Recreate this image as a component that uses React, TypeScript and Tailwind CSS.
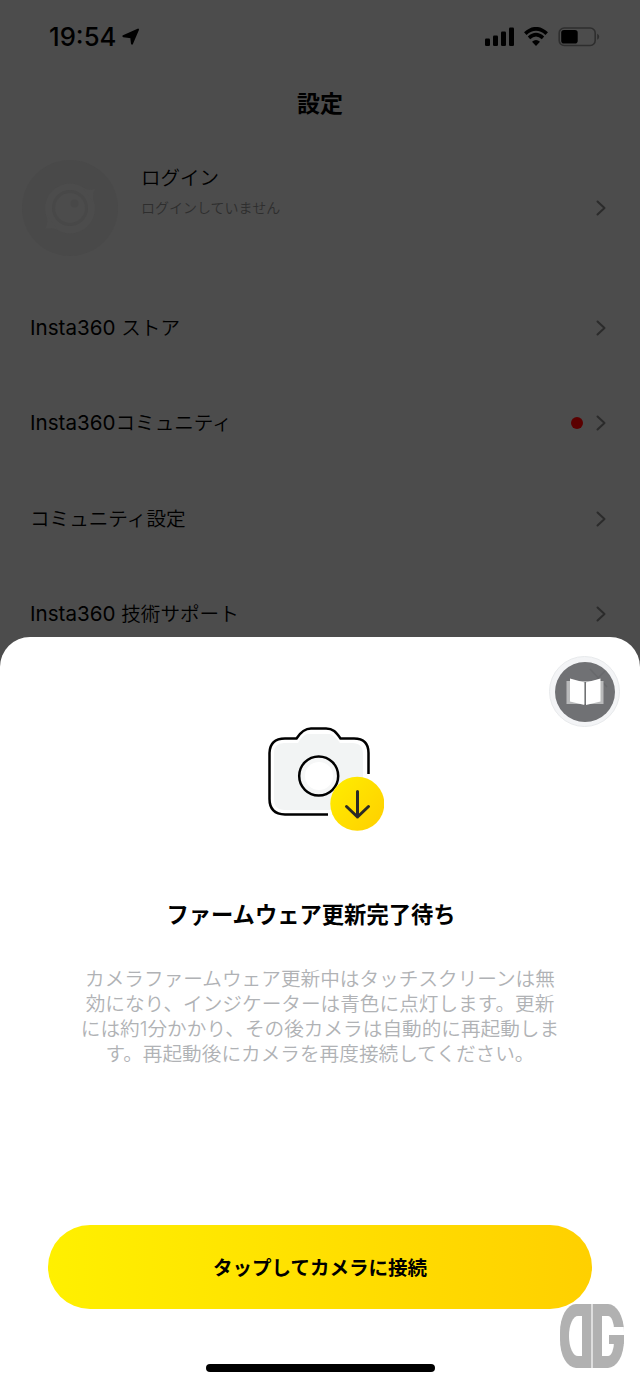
import { clsx } from "clsx";

type MenuItem = {
  brand?: string;
  label: string;
  hasBadge?: boolean;
};

const menuItems: MenuItem[] = [
  { brand: "Insta360 ", label: "ストア" },
  { brand: "Insta360", label: "コミュニティ", hasBadge: true },
  { label: "コミュニティ設定" },
  { brand: "Insta360 ", label: "技術サポート" },
];

const descriptionLines = [
  "カメラファームウェア更新中はタッチスクリーンは無",
  "効になり、インジケーターは青色に点灯します。更新",
  "には約1分かかり、その後カメラは自動的に再起動しま",
  "す。再起動後にカメラを再度接続してください。",
];

const Chevron = () => (
  <svg width="12" height="18" viewBox="0 0 12 18" fill="none" className="shrink-0">
    <path d="M2.5 2.5L9.5 9L2.5 15.5" stroke="#2b2b2b" strokeWidth="2" strokeLinecap="round" strokeLinejoin="round" />
  </svg>
);

const StatusBar = () => (
  <header className="flex h-[74px] items-center justify-between pl-[49px] pr-[40px]">
    <div className="flex items-center">
      <span className="text-[25.7px] font-[550] leading-none">19:54</span>
      <svg width="18" height="18" viewBox="0 0 18 18" className="ml-1.5">
        <path
          d="M16 1.6L10 15.6L9.2 9.2L1.4 8.2Z"
          fill="#000"
          stroke="#000"
          strokeWidth="2"
          strokeLinejoin="round"
        />
      </svg>
    </div>

    <svg width="116" height="20" viewBox="0 0 116 20" fill="none">
      {/* Signal */}
      <rect x="1" y="11.5" width="5" height="7.5" rx="1.3" fill="#000" />
      <rect x="9" y="8.5" width="5" height="10.5" rx="1.3" fill="#000" />
      <rect x="17" y="4.5" width="5" height="14.5" rx="1.3" fill="#000" />
      <rect x="25" y="0.5" width="5" height="18.5" rx="1.3" fill="#000" />
      {/* Wifi */}
      <path d="M41.3 6.6Q52 -2.9 62.7 6.6" stroke="#000" strokeWidth="3.8" />
      <path d="M45 10.9Q52 4.5 59 10.9" stroke="#000" strokeWidth="3.5" />
      <path d="M48 14.8Q52 11.2 56 14.8L52 18.9Z" fill="#000" />
      {/* Battery */}
      <rect x="75.2" y="1" width="36" height="17.5" rx="5" stroke="#2e2e2e" strokeWidth="1.6" />
      <rect x="77.2" y="3" width="16.5" height="13.5" rx="2.8" fill="#000" />
      <path d="M113.2 6.8Q115.2 7.6 115.2 9.7T113.2 12.8Z" fill="#2e2e2e" />
    </svg>
  </header>
);

const Avatar = () => (
  <svg width="96" height="96" viewBox="0 0 96 96" fill="none" className="shrink-0">
    <circle cx="48" cy="48" r="48" fill="#494949" />
    <circle cx="48" cy="48.5" r="25" fill="#4c4c4c" />
    <path d="M60 27Q66 31 73 29Q70 34 72 43ZM36 70Q30 67 23 69Q27 63 24 54Z" fill="#4c4c4c" />
    <circle cx="48" cy="48" r="16.5" stroke="#484848" strokeWidth="3" />
    <circle cx="52.5" cy="43.5" r="4" fill="#484848" />
  </svg>
);

const CameraUpdate = () => (
  <svg width="120" height="108" viewBox="0 0 120 108" fill="none">
    <defs>
      <linearGradient id="badge" x1="65" y1="60" x2="118" y2="104" gradientUnits="userSpaceOnUse">
        <stop stopColor="#ffec00" />
        <stop offset="1" stopColor="#ffd000" />
      </linearGradient>
    </defs>
    <path
      d="M20 18H34Q38 11 43 9H66Q71 11 76 18H88Q99 18 99 29V85H21Q10 85 10 74V28Q10 18 20 18Z"
      fill="#f2f4f4"
    />
    <path
      d="M64 89.5H21Q5.5 89 5.5 74V28Q6 13.5 21 13.5H32.5C37 6.5 41 3.5 47 3.5H62C69 3.5 72 7 76.5 13.5H90Q104.5 13.5 104.5 28V49"
      stroke="#000"
      strokeWidth="2.5"
    />
    <circle cx="54.7" cy="51" r="19.5" fill="#f6f7f7" stroke="#000" strokeWidth="2.5" />
    <circle cx="55" cy="51" r="14" fill="#fff" />
    <circle cx="93.3" cy="78.8" r="27" fill="url(#badge)" />
    <path
      d="M93.5 66.5V92M82.5 81.5L93.5 92L104.5 81.5"
      stroke="#2a2a25"
      strokeWidth="3"
      strokeLinecap="round"
      strokeLinejoin="round"
    />
  </svg>
);

const ManualButton = () => (
  <button className="absolute right-5 top-[19px] flex h-[71px] w-[71px] items-center justify-center rounded-full border border-[#e8eaec] bg-[#f3f4f6]">
    <svg width="60" height="60" viewBox="0 0 60 60">
      <circle cx="30" cy="30" r="30" fill="#707174" />
      <path d="M35 7L52 25M50 9L40 19" stroke="#68696c" strokeWidth="1.5" />
      <rect x="11.5" y="19" width="37" height="23" fill="#b9babb" />
      <path d="M15 16.5L29.5 20.5V43L15 39.5ZM45.5 16.5L31 20.5V43L45.5 39.5Z" fill="#fff" />
      <path d="M30.2 20V43" stroke="#5f6062" strokeWidth="1.2" />
    </svg>
  </button>
);

const Watermark = () => (
  <div className="absolute bottom-4 right-4 flex h-16 w-16">
    <div className="flex w-[31px] items-center justify-end rounded-l-[16px_28px] bg-[#b1b1b1] pr-[9px]">
      <div className="h-10 w-[13px] rounded-l-[9px_20px] bg-white" />
    </div>
    <div className="w-0.5 bg-[#dedede]" />
    <div className="relative flex w-[31px] items-center overflow-hidden rounded-r-[16px_28px] bg-[#b1b1b1] pl-[9px]">
      <div className="h-10 w-3 rounded-r-[6px_14px] bg-white" />
      <div className="absolute right-0 top-[23px] h-2 w-[11px] bg-white" />
      <div className="absolute right-0 top-[31px] h-[9px] w-[15px] bg-[#b1b1b1]" />
    </div>
  </div>
);

const App = () => {
  return (
    <div className="flex h-[1384px] w-[640px] flex-col overflow-hidden bg-[#4c4c4c] font-[Inter,'Noto_Sans_CJK_JP',sans-serif] text-black">
      {/* Settings screen, dimmed */}
      <main className="h-[637px] shrink-0">
        <StatusBar />

        <h1 className="flex h-[60px] items-center justify-center pt-px text-[23px] font-bold">設定</h1>

        <section className="mt-[26px] flex h-24 items-center pl-[22px] pr-[33px]">
          <Avatar />
          <div className="ml-[23px] flex-1 pb-[30px]">
            <p className="text-[19.5px] font-[350] leading-[30px]">ログイン</p>
            <p className="text-[14px] font-[350] leading-[30px] text-[#2e2e2e]">ログインしていません</p>
          </div>
          <Chevron />
        </section>

        <ul className="mt-6">
          {menuItems.map((item) => (
            <li key={item.label} className="flex h-[95.5px] items-center pl-[30px] pr-[33px]">
              <span className="flex-1 whitespace-pre pt-px text-[19.6px] font-[350]">
                {item.brand && <span className="text-[20.6px] font-normal">{item.brand}</span>}
                {item.label}
              </span>
              <span className={clsx("mr-3 size-3 rounded-full", item.hasBadge && "bg-[#5b0000]")} />
              <Chevron />
            </li>
          ))}
        </ul>
      </main>

      {/* Firmware update sheet */}
      <section className="relative flex flex-1 flex-col items-center rounded-t-[30px] bg-white">
        <ManualButton />

        <div className="mt-[88px] pl-2">
          <CameraUpdate />
        </div>

        <h2 className="mt-[65px] pr-[18px] text-[22.3px] font-bold leading-[34px]">
          ファームウェア更新完了待ち
        </h2>

        <div className="mt-[35px] text-center text-[19.65px] font-[350] leading-[25px] text-[#b0b2b5]">
          {descriptionLines.map((line) => (
            <p key={line} className="whitespace-nowrap">{line}</p>
          ))}
        </div>

        <button className="mt-[158px] h-[84px] w-[544px] rounded-full bg-linear-to-r from-[#fff000] to-[#ffd000] pt-1 text-[19.5px] font-bold">
          タップしてカメラに接続
        </button>

        <div className="mt-[55px] h-2 w-[229px] rounded-full bg-black" />

        <Watermark />
      </section>
    </div>
  );
};

export default App;
